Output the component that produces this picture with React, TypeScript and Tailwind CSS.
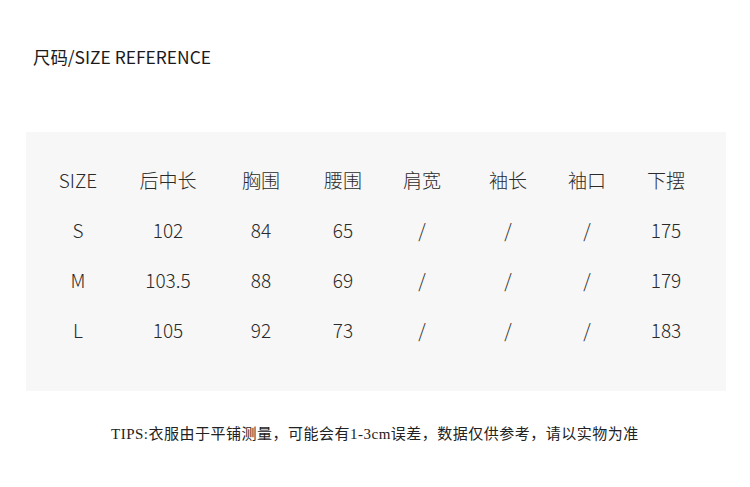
import React from "react";

const headers = ["SIZE", "后中长", "胸围", "腰围", "肩宽", "袖长", "袖口", "下摆"];
const rows = [
  ["S", "102", "84", "65", "/", "/", "/", "175"],
  ["M", "103.5", "88", "69", "/", "/", "/", "179"],
  ["L", "105", "92", "73", "/", "/", "/", "183"],
];

export default function App() {
  const sans = { fontFamily: '"Noto Sans CJK SC", "Noto Sans", sans-serif' };
  return (
    <div className="w-[750px] h-[487px] bg-white flex flex-col text-[#222]" style={sans}>
      <div className="pl-[33px] pt-[45px] h-[132px] text-[17.4px] leading-[24px] text-[#1a1a1a]">尺码/SIZE REFERENCE</div>
      <div className="mx-[26px] w-[700px] h-[259px] bg-[#f7f7f7] pt-[23px]">
        <div className="grid grid-cols-[104px_76px_110px_54px_104px_68px_90px_68px] font-light text-[19px] text-[#2a2a2a]">
          {headers.map((h) => (
            <div key={h} className="h-[50px] flex items-center justify-center whitespace-nowrap">{h}</div>
          ))}
          {rows.map((r, i) =>
            r.map((c, j) => (
              <div key={i + "-" + j} className="h-[50px] flex items-center justify-center whitespace-nowrap">{c}</div>
            ))
          )}
        </div>
      </div>
      <div
        className="pt-[33px] pl-[111px] text-[15px] tracking-[0.5px] leading-[20px] text-[#222] whitespace-nowrap"
        style={{ fontFamily: '"Liberation Serif", "Noto Sans CJK SC", serif' }}
      >
        TIPS:衣服由于平铺测量，可能会有1-3cm误差，数据仅供参考，请以实物为准
      </div>
    </div>
  );
}
